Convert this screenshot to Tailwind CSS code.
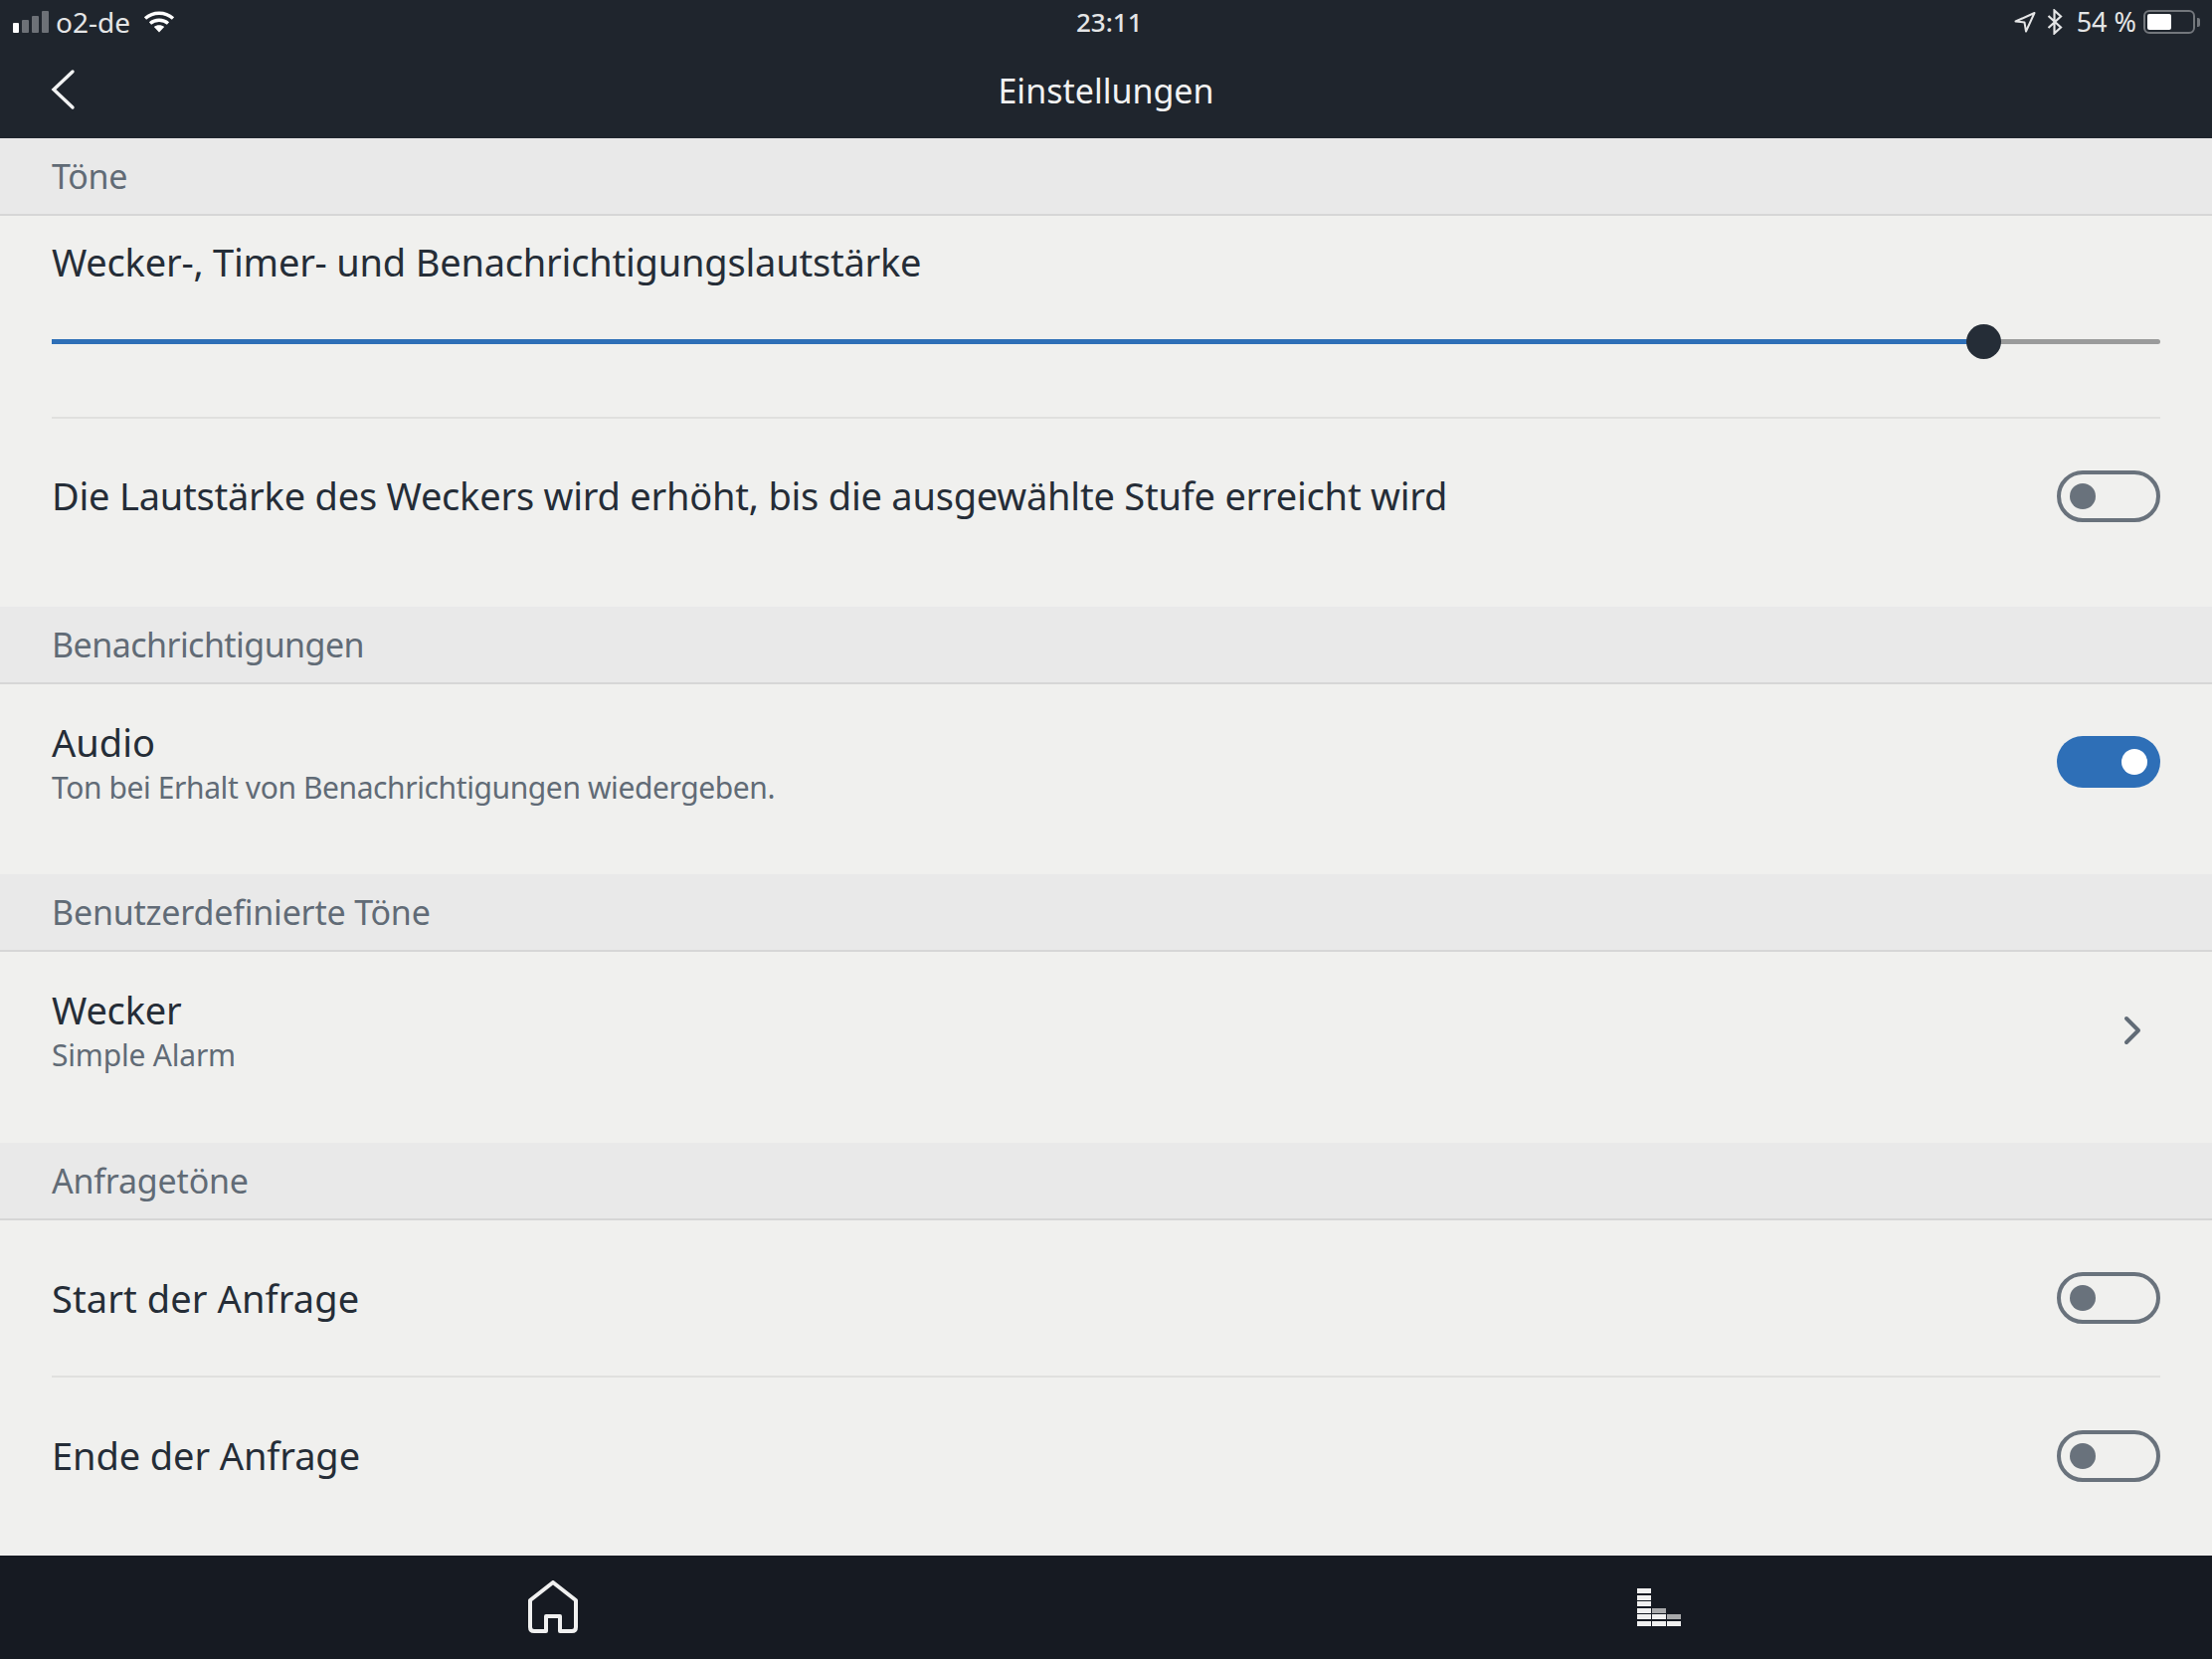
<!DOCTYPE html>
<html lang="en">

<head>
    <meta charset="UTF-8">
    <title>Einstellungen</title>
    <script src="https://cdn.jsdelivr.net/npm/@tailwindcss/browser@4"></script>
</head>

<body class="bg-[#f0f0ee] font-['Noto_Sans',sans-serif] text-[#252d37]">
    <div class="w-[2224px] h-[1668px] flex flex-col overflow-hidden">

        <!-- status bar + nav -->
        <header class="h-[139px] shrink-0 bg-[#1f252d] text-white flex flex-col">
            <div class="h-[44px] relative flex items-center justify-between text-[26px] text-[#e4e5e6]">
                <div class="flex items-center pl-[13px]">
                    <div class="flex items-end gap-[3px] h-[22px]">
                        <div class="w-[6px] h-[10px] rounded-[1px] bg-white"></div>
                        <div class="w-[7px] h-[13px] rounded-[1px] bg-[#6d7177]"></div>
                        <div class="w-[7px] h-[17px] rounded-[1px] bg-[#6d7177]"></div>
                        <div class="w-[7px] h-[22px] rounded-[1px] bg-[#6d7177]"></div>
                    </div>
                    <span class="ml-[7px] text-[28px]">o2-de</span>
                    <svg class="ml-[13px]" width="32" height="22" viewBox="0 0 32 22" fill="none" stroke="white" stroke-width="3.4">
                        <path d="M2 7.5C10 0.5 22 0.5 30 7.5" />
                        <path d="M7 12.5C12 8.2 20 8.2 25 12.5" />
                        <path d="M16 21.5L10.8 16C13.5 13.6 18.5 13.6 21.2 16Z" fill="white" stroke="none" />
                    </svg>
                </div>
                <div class="absolute left-[1082px] w-[64px] text-center font-medium">23:11</div>
                <div class="flex items-center pr-[12px]">
                    <svg width="22" height="22" viewBox="0 0 22 22" fill="none" stroke="#e4e5e6" stroke-width="2" stroke-linejoin="round">
                        <path d="M1.5 10.5L20.5 2L12 20.5L10.5 11.5Z" />
                    </svg>
                    <svg class="ml-[11px]" width="16" height="26" viewBox="0 0 16 26" fill="none" stroke="#e4e5e6" stroke-width="2.2">
                        <path d="M1.5 7L14 18.5L7.5 24.5V1.5L14 7.5L1.5 19" />
                    </svg>
                    <span class="ml-[14px] text-[27px]">54 %</span>
                    <div class="ml-[7px] w-[52px] h-[24px] rounded-[6px] border-2 border-[#73777c] p-[2px]">
                        <div class="w-[24px] h-full rounded-[2px] bg-white"></div>
                    </div>
                    <div class="ml-[2px] w-[3px] h-[9px] rounded-r-[2px] bg-[#73777c]"></div>
                </div>
            </div>
            <div class="flex-1 relative flex items-center justify-center text-[34px] text-[#f2f3f3]">
                <svg class="absolute left-[50px] top-[25px]" width="26" height="42" viewBox="0 0 26 42" fill="none" stroke="#f2f3f3" stroke-width="3.4" stroke-linecap="round">
                    <path d="M23 3L4 21L23 39" />
                </svg>
                Einstellungen
            </div>
        </header>

        <main class="flex-1 flex flex-col">
            <!-- Töne -->
            <div class="h-[78px] px-[52px] flex items-center bg-[#e9e9e9] border-b-2 border-[#d6d6d6] text-[34px] tracking-[-0.3px] text-[#616b76]">Töne</div>
            <div class="px-[52px]">
                <div class="h-[204px] border-b-2 border-[#e0e0de] pt-[20px]">
                    <div class="text-[38px] leading-[52px] tracking-[-0.21px]">Wecker-, Timer- und Benachrichtigungslautstärke</div>
                    <div class="mt-[52px] relative h-[5px] rounded-full bg-[#9a9b9b]">
                        <div class="h-full w-[1943px] bg-[#2e6fb7]"></div>
                        <div class="absolute left-[1925px] top-[-15px] w-[35px] h-[35px] rounded-full bg-[#252d37]"></div>
                    </div>
                </div>
                <div class="h-[155px] flex items-center justify-between">
                    <div class="text-[38px] tracking-[-0.22px]">Die Lautstärke des Weckers wird erhöht, bis die ausgewählte Stufe erreicht wird</div>
                    <div class="w-[104px] h-[52px] rounded-full border-4 border-[#69727c] flex items-center pl-[9px]">
                        <div class="w-[26px] h-[26px] rounded-full bg-[#69727c]"></div>
                    </div>
                </div>
            </div>
            <div class="h-[34px]"></div>

            <!-- Benachrichtigungen -->
            <div class="h-[78px] px-[52px] flex items-center bg-[#e9e9e9] border-b-2 border-[#d6d6d6] text-[34px] tracking-[-0.55px] text-[#616b76]">Benachrichtigungen</div>
            <div class="h-[191px] px-[52px] pt-[34px] flex justify-between items-start">
                <div>
                    <div class="text-[38px] leading-[48px]">Audio</div>
                    <div class="mt-[2px] text-[30px] leading-[40px] tracking-[-0.4px] text-[#616b76]">Ton bei Erhalt von Benachrichtigungen wiedergeben.</div>
                </div>
                <div class="mt-[18px] w-[104px] h-[52px] rounded-full bg-[#2e6fb7] flex items-center justify-end pr-[13px]">
                    <div class="w-[26px] h-[26px] rounded-full bg-white"></div>
                </div>
            </div>

            <!-- Benutzerdefinierte Töne -->
            <div class="h-[78px] px-[52px] flex items-center bg-[#e9e9e9] border-b-2 border-[#d6d6d6] text-[34px] tracking-[-0.2px] text-[#616b76]">Benutzerdefinierte Töne</div>
            <div class="h-[192px] px-[52px] pt-[34px] flex justify-between items-start">
                <div>
                    <div class="text-[38px] leading-[48px] tracking-[-0.2px]">Wecker</div>
                    <div class="mt-[2px] text-[30px] leading-[40px] tracking-[-0.2px] text-[#616b76]">Simple Alarm</div>
                </div>
                <svg class="mt-[30px] mr-[18px]" width="20" height="30" viewBox="0 0 20 30" fill="none" stroke="#616b76" stroke-width="4" stroke-linecap="round" stroke-linejoin="round">
                    <path d="M4 3L16 15L4 27" />
                </svg>
            </div>

            <!-- Anfragetöne -->
            <div class="h-[78px] px-[52px] flex items-center bg-[#e9e9e9] border-b-2 border-[#d6d6d6] text-[34px] tracking-[-0.2px] text-[#616b76]">Anfragetöne</div>
            <div class="px-[52px]">
                <div class="h-[158px] border-b-2 border-[#e0e0de] flex items-center justify-between">
                    <div class="text-[38px] tracking-[0.1px]">Start der Anfrage</div>
                    <div class="w-[104px] h-[52px] rounded-full border-4 border-[#69727c] flex items-center pl-[9px]">
                        <div class="w-[26px] h-[26px] rounded-full bg-[#69727c]"></div>
                    </div>
                </div>
                <div class="h-[157px] flex items-center justify-between">
                    <div class="text-[38px] tracking-[-0.1px]">Ende der Anfrage</div>
                    <div class="w-[104px] h-[52px] rounded-full border-4 border-[#69727c] flex items-center pl-[9px]">
                        <div class="w-[26px] h-[26px] rounded-full bg-[#69727c]"></div>
                    </div>
                </div>
            </div>
        </main>

        <!-- tab bar -->
        <nav class="h-[104px] shrink-0 bg-[#161a22] grid grid-cols-2">
            <div class="flex items-center justify-center">
                <svg width="52" height="54" viewBox="0 0 52 54" fill="none" stroke="#f0f0f0" stroke-width="4" stroke-linejoin="round">
                    <path d="M3 20L26 2L49 20V47Q49 51 45 51H33V36H19V51H7Q3 51 3 47Z" />
                </svg>
            </div>
            <div class="flex items-center justify-center">
                <div class="flex items-end gap-[1px]">
                    <div class="flex flex-col gap-[1.5px]">
                        <div class="w-[14px] h-[5px] bg-[#f0f0f0]"></div>
                        <div class="w-[14px] h-[5px] bg-[#f0f0f0]"></div>
                        <div class="w-[14px] h-[5px] bg-[#f0f0f0]"></div>
                        <div class="w-[14px] h-[5px] bg-[#f0f0f0]"></div>
                        <div class="w-[14px] h-[5px] bg-[#f0f0f0]"></div>
                        <div class="w-[14px] h-[5px] bg-[#f0f0f0]"></div>
                    </div>
                    <div class="flex flex-col gap-[1.5px]">
                        <div class="w-[14px] h-[5px] bg-[#a8a9ab]"></div>
                        <div class="w-[14px] h-[5px] bg-[#f0f0f0]"></div>
                        <div class="w-[14px] h-[5px] bg-[#f0f0f0]"></div>
                    </div>
                    <div class="flex flex-col gap-[1.5px]">
                        <div class="w-[14px] h-[5px] bg-[#a8a9ab]"></div>
                        <div class="w-[14px] h-[5px] bg-[#f0f0f0]"></div>
                    </div>
                </div>
            </div>
        </nav>
    </div>
</body>

</html>
